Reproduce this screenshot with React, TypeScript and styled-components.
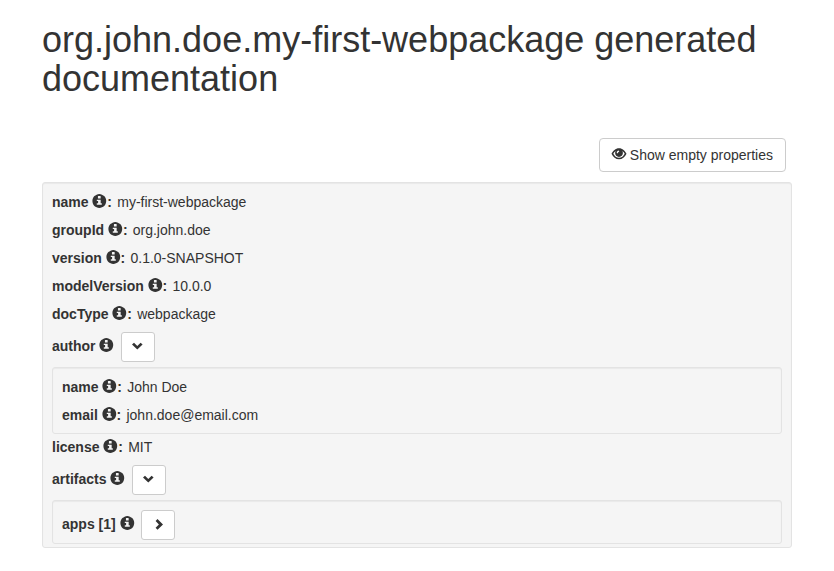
import React from "react";
import styled, { createGlobalStyle } from "styled-components";

const GlobalStyle = createGlobalStyle`
  *, *::before, *::after { box-sizing: border-box; }
  body {
    margin: 0;
    background: #fff;
    color: #333;
    font: 14px/20px "Liberation Sans", Arial, sans-serif;
  }
`;

const Page = styled.main`
  width: 750px;
  margin: 0 0 0 42px;
  padding-top: 20px;
`;

const Title = styled.h1`
  margin: 0;
  font-size: 36px;
  font-weight: 500;
  line-height: 39px;
`;

const Toolbar = styled.div`
  display: flex;
  justify-content: flex-end;
  margin-top: 40px;
  padding-right: 6px;
`;

const Button = styled.button`
  height: 34px;
  padding: 6px 12px;
  border: 1px solid #ccc;
  border-radius: 4px;
  background: #fff;
  color: #333;
  font: inherit;
  white-space: nowrap;
`;

const ToggleButton = styled(Button)`
  display: flex;
  align-items: center;
  justify-content: center;
  width: 34px;
  height: 30px;
  padding: 0;
  margin-left: 6.25px;
  border-radius: 3px;
`;

const Well = styled.section<{ $outer?: boolean }>`
  margin: ${(p) => (p.$outer ? "10px 0 0" : "0 0 -1px")};
  padding: 5px 9px 4px;
  border: 1px solid #e3e3e3;
  border-radius: 3px;
  background: #f5f5f5;
  box-shadow: inset 0 1px 1px rgba(0, 0, 0, 0.05);
`;

const Row = styled.div`
  height: 28px;
  padding: 4px 0;
  white-space: nowrap;
`;

const GroupRow = styled.div<{ $last?: boolean }>`
  display: flex;
  align-items: flex-start;
  height: ${(p) => (p.$last ? "33px" : "39px")};
  padding-top: 4px;
`;

const Label = styled.strong<{ $group?: boolean }>`
  padding-top: ${(p) => (p.$group ? "4px" : "0")};
  font-weight: 700;
  white-space: pre;
`;

const Value = styled.span`
  margin-left: 5.2px;
`;

const Glyph = styled.svg`
  position: relative;
  top: -1px;
  display: inline-block;
  width: 14px;
  height: 14px;
  vertical-align: -2px;
  fill: currentColor;
  overflow: visible;
`;

const InfoGlyph = styled(Glyph)`
  top: -1.5px;
  margin: 0 0.9px 0 0;
`;

const Chevron = styled.svg`
  width: 12px;
  height: 12px;
  fill: currentColor;
  overflow: visible;
`;

const InfoIcon = () => (
  <InfoGlyph viewBox="-10 15 1170 1170">
    <path
      fillRule="evenodd"
      transform="translate(0 1200) scale(1 -1)"
      d="M600 1177q117 0 224 -45.5t184.5 -123t123 -184.5t45.5 -224t-45.5 -224t-123 -184.5t-184.5 -123t-224 -45.5t-224 45.5t-184.5 123t-123 184.5t-45.5 224t45.5 224t123 184.5t184.5 123t224 45.5zM690 1010h-180q-10 0 -17.5 -7.5t-7.5 -17.5v-160q0 -10 7.5 -17.5t17.5 -7.5h180q10 0 17.5 7.5t7.5 17.5v160q0 10 -7.5 17.5t-17.5 7.5zM690 710h-275q-10 0 -17.5 -7.5t-7.5 -17.5v-70q0 -10 7.5 -17.5t17.5 -7.5h85v-180h-85q-10 0 -17.5 -7.5t-7.5 -17.5v-80q0 -10 7.5 -17.5t17.5 -7.5h370q10 0 17.5 7.5t7.5 17.5v80q0 10 -7.5 17.5t-17.5 7.5h-70v275q0 10 -7.5 17.5t-17.5 7.500z"
    />
  </InfoGlyph>
);

const EyeIcon = () => (
  <Glyph viewBox="0 0 14 14">
    <path
      fillRule="evenodd"
      d="M7 1.3C3.500 1.300 .9 4 -.5 6.700C1.100 10 3.700 12.300 7 12.300S12.900 10 14.500 6.700C13.100 4 10.500 1.300 7 1.300ZM3.700 4.100C3.300 4.700 3.100 5.300 3.100 6.100C3.100 8.300 4.800 9.900 7 9.900S10.900 8.300 10.900 6.100C10.900 5.300 10.700 4.700 10.300 4.100C11.300 4.800 12.200 5.700 12.700 6.700C11.500 9 9.600 10.800 7 10.800S2.500 9 1.300 6.700C1.800 5.700 2.700 4.800 3.700 4.100ZM6.700 3.600L7.300 4.700C6.400 4.800 6 5.400 5.700 6.500L4.700 5.700C4.800 4.500 5.600 3.700 6.700 3.600Z"
    />
  </Glyph>
);

const ChevronIcon = ({ open }: { open: boolean }) => (
  <Chevron viewBox="-0.3 0 12 12">
    <path
      d={
        open
          ? "M1.700 1.700L5 5L8.300 1.700L10.300 3.600L5 8.500L-.3 3.600Z"
          : "M5.200 .1L10.700 5.400L5.200 10.700L3.300 8.800L6.600 5.400L3.300 2Z"
      }
    />
  </Chevron>
);

const Property = ({ name, value }: { name: string; value: string }) => (
  <Row>
    <Label>
      {name} <InfoIcon />:
    </Label>
    <Value>{value}</Value>
  </Row>
);

const Group = ({ name, open = false, last = false }: { name: string; open?: boolean; last?: boolean }) => (
  <GroupRow $last={last}>
    <Label $group>
      {name} <InfoIcon />
    </Label>
    <ToggleButton aria-label={name}>
      <ChevronIcon open={open} />
    </ToggleButton>
  </GroupRow>
);

export default function App() {
  return (
    <Page>
      <GlobalStyle />
      <Title>org.john.doe.my-first-webpackage generated documentation</Title>
      <Toolbar>
        <Button>
          <EyeIcon /> Show empty properties
        </Button>
      </Toolbar>
      <Well $outer>
        <Property name="name" value="my-first-webpackage" />
        <Property name="groupId" value="org.john.doe" />
        <Property name="version" value="0.1.0-SNAPSHOT" />
        <Property name="modelVersion" value="10.0.0" />
        <Property name="docType" value="webpackage" />
        <Group name="author" open />
        <Well>
          <Property name="name" value="John Doe" />
          <Property name="email" value="john.doe@email.com" />
        </Well>
        <Property name="license" value="MIT" />
        <Group name="artifacts" open />
        <Well>
          <Group name="apps [1]" last />
        </Well>
      </Well>
    </Page>
  );
}
